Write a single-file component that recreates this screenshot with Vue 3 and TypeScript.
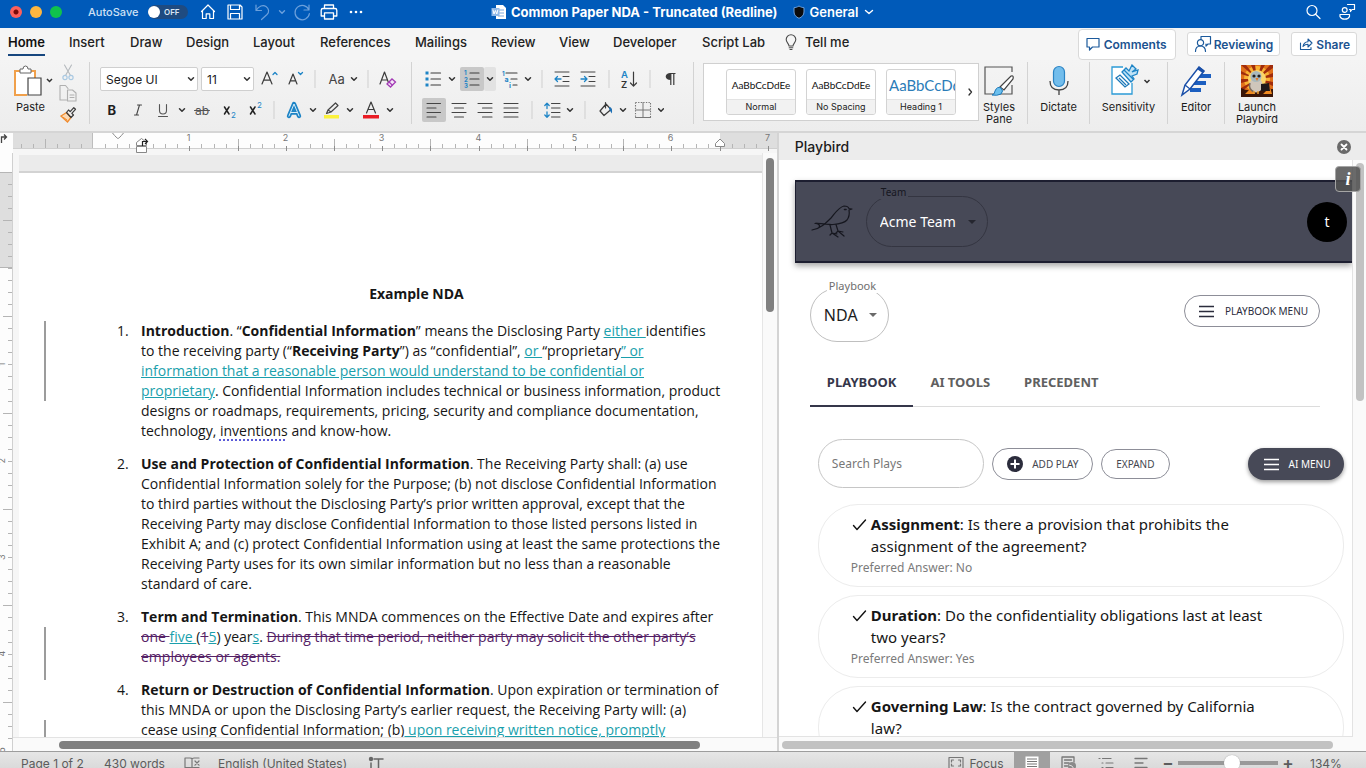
<script setup lang="ts">
import { h, ref, type FunctionalComponent } from 'vue'

/* Glyphs are drawn around the origin, so any box width keeps them centred. */
const ln = (d: string, c = '#3b3b3b', w = 1.2) =>
  `<path d="${d}" fill="none" stroke="${c}" stroke-width="${w}" stroke-linecap="round" stroke-linejoin="round"/>`
const tx = (s: string, x: number, y: number, size: number, c = '#2b2b2b', extra = '') =>
  `<text x="${x}" y="${y}" font-size="${size}" fill="${c}" font-family="Inter, sans-serif" ${extra}>${s}</text>`
const blue = '#1d84c6'

const glyphs: Record<string, string> = {
  chev: ln('M-2.5 -1.2 L0 1.3 L2.5 -1.2', '#333', 1.5),
  chevWhite: ln('M-3.5 -1.5 L0 1.5 L3.5 -1.5', '#fff', 1.4),
  chevFaint: ln('M-2.5 -1.2 L0 1.3 L2.5 -1.2', '#6ba0dc', 1.4),
  sep: '<path d="M0 -9V9" stroke="#cfcfcf" stroke-width="1"/>',
  home: ln('M-6.5 -0.5 L0 -7 L6.5 -0.5 M-5.5 -1.5V6.5H-1.8V1.8H1.8V6.5H5.5V-1.5', '#fff', 1.2),
  save: ln('M-7 -7H5L7 -5V7H-7Z M-4.5 -7V-2.5H4.5V-7 M-4.5 7V1.5H4.5V7', '#fff', 1.2),
  undo: ln('M-6 -7V-1.5H-0.5 M-6 -1.5C-3 -6 1 -7.5 4 -5.5C7 -3.5 7.5 0 5 2.5L-0.5 7.5', '#6ba0dc', 1.2),
  redo: ln('M7 -7V-2H2 M7 -2A7.2 7.2 0 1 0 7.4 1.5', '#6ba0dc', 1.2),
  print: ln('M-4.5 -3.5V-7H4.5V-3.5 M-4.5 4H-7.8V-1.8Q-7.8 -3.5 -6 -3.5H6Q7.8 -3.5 7.8 -1.8V4H4.5 M-4.5 0.8H4.5V7H-4.5Z', '#fff', 1.3),
  more: '<g fill="#fff"><circle cx="-5" cy="0" r="1.3"/><circle cx="0" cy="0" r="1.3"/><circle cx="5" cy="0" r="1.3"/></g>',
  word: '<path d="M-3 -7H4L7 -4V7H-3Z" fill="#fff"/><path d="M-1 -2H5M-1 1H5M-1 4H5" stroke="#7fa9dc" stroke-width="1"/><rect x="-7.5" y="-4" width="8" height="8" fill="#8fb8e8"/>' + ln('M-6 -2L-5 2L-3.6 -1.5L-2.2 2L-1.2 -2', '#fff', 1),
  shield: '<path d="M0 -6C2 -4.8 3.5 -4.4 5 -4.3V0C5 3 3 5 0 6.3C-3 5 -5 3 -5 0V-4.3C-3.5 -4.4 -2 -4.8 0 -6Z" fill="#0b0b0b" stroke="#6ba0dc" stroke-width="1"/>',
  search: '<circle cx="-1" cy="-1.5" r="5" fill="none" stroke="#fff" stroke-width="1.2"/>' + ln('M2.6 2.2L7 6.5', '#fff', 1.2),
  person: ln('M-7 2.5H2.5V4.5Q1.5 7.2 -2.3 7.2Q-6 7.2 -7 4.5Z M0.5 -7.5H7.5V-2.5H5L3.5 -0.5V-2.5H2.5', '#fff', 1.2) + '<circle cx="-2.3" cy="-2" r="2.4" fill="none" stroke="#fff" stroke-width="1.2"/>',
  bulb: ln('M-2 4C-2 1.5 -4.8 0.5 -4.8 -2.5A4.8 4.8 0 0 1 4.8 -2.5C4.8 0.5 2 1.5 2 4Z M-1.8 5.8H1.8 M-1 7.5H1', '#4a4a4a', 1.1),
  comment: ln('M-6 -5.5H6V3H-0.5L-3.5 6V3H-6Z', '#1c5a9c', 1.2),
  reviewing: ln('M-7.5 7.5C-7.5 3.5 -5 2 -2.5 2C0 2 2.5 3.5 2.5 7.5 M-2 -4.5V-7.5H7.5V0H5L3 2V0', '#1c5a9c', 1.2) + '<circle cx="-2.5" cy="-1.3" r="3.1" fill="none" stroke="#1c5a9c" stroke-width="1.2"/>',
  share: ln('M-5.5 -1V5.5H5V3.5 M-3 2.5C-2.5 -0.5 -1 -2.2 2 -2.3V-5L6 -1L2 3V0.3C0 0.3 -1.5 0.8 -3 2.5Z', '#1c5a9c', 1.1),
  cut: ln('M-3.5 -7.5L2.5 3 M3.5 -7.5L-2.5 3', '#b4b9bd', 1.1) + '<g fill="none" stroke="#a9c9e2" stroke-width="1.2"><circle cx="-3" cy="5" r="2.1"/><circle cx="3" cy="5" r="2.1"/></g>',
  copy: ln('M-1.5 6.5H-8V-8H-2.5L0 -5 M-0.5 -3.5H4.5L8 -0.5V7.5H-0.5Z M2 1.5H6 M2 4H6', '#b0b0b0', 1.1),
  brush: '<path d="M-7 1.5L-1.5 -2L3 3L-0.5 7.5Z" fill="#fbd9b4" stroke="#f08b2d" stroke-width="1.3"/>' + ln('M-4.5 3L-1 5.5', '#f08b2d', 1) + ln('M-1.5 -2L0.5 -4.5L2.2 -2.8L5.8 -6.8L7.5 -5.2L3.8 -1.2L5.5 0.5L3 3Z', '#3b3b3b', 1.2),
  grow: ln('M-7 5L-2 -7L3 5 M-5.3 1.2H1.3', '#3b3b3b', 1.2) + ln('M4 -4.5L6 -6.5L8 -4.5', blue, 1.3),
  shrink: ln('M-7 5L-3 -5L1 5 M-5.5 1.8H-0.5', '#3b3b3b', 1.2) + ln('M2.5 -6.5L4.5 -4.5L6.5 -6.5', blue, 1.3),
  caseAa: tx('Aa', -7.5, 4.5, 13, '#444'),
  clear: ln('M-8 5L-3.5 -7L1 5 M-6.3 1H-0.7', '#3b3b3b', 1.2) + '<path d="M-1 5L4 0L7.5 3L2.5 8Z" fill="#f4e6f7" stroke="#a33bb5" stroke-width="1.3"/><path d="M1 3L4.5 6.2" stroke="#a33bb5" stroke-width="1.2"/>',
  bold: tx('B', -4.5, 5, 13, '#1f1f1f', 'font-weight="700"'),
  italic: ln('M-0.5 -5H3.5 M-3.5 5H0.5 M1.5 -5L-1.5 5', '#444', 1.1),
  underline: ln('M-3.5 -5.5V0.5Q-3.5 4 0 4Q3.5 4 3.5 0.5V-5.5 M-4.5 6.5H4.5', '#555', 1.1),
  strike: tx('ab', -7, 4.5, 12, '#555') + ln('M-7.5 0.5H7.5', '#555', 1),
  sub: ln('M-4.5 -3L0 4 M0 -3L-4.5 4', '#222', 1.5) + tx('2', 2, 8, 8, blue),
  sup: ln('M-4.5 -3L0 4 M0 -3L-4.5 4', '#222', 1.5) + tx('2', 2, -2, 8, blue),
  effects: ln('M-5 6L0 -6L5 6 M-3.4 2.5H3.4', blue, 4.4) + ln('M-5 6L0 -6L5 6 M-3.4 2.5H3.4', '#d8edf9', 1),
  highlight: '<rect x="-8" y="5" width="15" height="3.5" fill="#fbf13c"/>' + ln('M-5.5 3.5L-4 0L3.5 -7L6 -4.5L-1 2L-5.5 3.5Z M-4 0L-1 2', '#444', 1.2),
  fontColor: '<rect x="-8" y="5" width="16" height="3.5" fill="#ea1c24"/>' + ln('M-4.5 3L0 -8L4.5 3 M-3 -0.5H3', '#3b3b3b', 1.2),
  bullets: '<g fill="#1d84c6"><rect x="-7.5" y="-7.5" width="3" height="3"/><rect x="-7.5" y="-1.5" width="3" height="3"/><rect x="-7.5" y="4.5" width="3" height="3"/></g>' + ln('M-2 -6H7.5 M-2 0H7.5 M-2 6H7.5'),
  numbers: tx('1', -8, -4, 6, blue, 'font-weight="700"') + tx('2', -8, 2.5, 6, blue, 'font-weight="700"') + tx('3', -8, 8.8, 6, blue, 'font-weight="700"') + ln('M-2 -6H7 M-2 0H7 M-2 6H7'),
  multi: tx('1', -8, -3, 6, blue, 'font-weight="700"') + tx('a', -5.5, 3, 7, blue, 'font-weight="700"') + tx('i', -1, 9, 7, blue, 'font-weight="700"') + ln('M-4 -6H7 M1 0H7 M3 6H7'),
  outdent: ln('M-7 -7H7 M1 -2.5H7 M1 2.5H7 M-7 7H7', '#444', 1) + ln('M-7 0H-1 M-4.5 -2.5L-7 0L-4.5 2.5', blue, 1.3),
  indent: ln('M-7 -7H7 M1 -2.5H7 M1 2.5H7 M-7 7H7', '#444', 1) + ln('M-7 0H-1 M-3.5 -2.5L-1 0L-3.5 2.5', blue, 1.3),
  sort: tx('A', -8, -1, 9.5, blue, 'font-weight="600"') + tx('Z', -8, 8.5, 9.5, '#333', 'font-weight="600"') + ln('M4.5 -7V7 M1.5 4L4.5 7.2L7.5 4'),
  pilcrow: '<path d="M-0.5 -5.5H5.5 M0.8 -5.5V6 M3.8 -5.5V6" stroke="#3b3b3b" stroke-width="1.2" fill="none"/><path d="M0.8 -6C-6 -6 -6 1 0.8 1Z" fill="#3b3b3b"/>',
  left: ln('M-7 -6.5H6.5 M-7 -2H2 M-7 2.5H6.5 M-7 7H2', '#444', 1.1),
  center: ln('M-7 -6.5H7 M-4.5 -2H4.5 M-7 2.5H7 M-4.5 7H4.5', '#444', 1.1),
  right: ln('M-7 -6.5H7 M-2.5 -2H7 M-7 2.5H7 M-2.5 7H7', '#444', 1.1),
  justify: ln('M-7 -6.5H7 M-7 -2H7 M-7 2.5H7 M-7 7H7', '#444', 1.1),
  spacing: ln('M-5 -6.5V-1.5 M-7.2 -4.5L-5 -6.8L-2.8 -4.5 M-5 2V7 M-7.2 5L-5 7.2L-2.8 5', blue, 1.3) + ln('M-0.5 -6.5H8 M-0.5 -2H8 M-0.5 2.5H8 M-0.5 7H8', '#444', 1),
  bucket: ln('M-6 1L0 -6L5 -0.5L-2 5.5Z M-0.5 -2V-7.5', '#3b3b3b', 1.2) + '<path d="M3 -3C6 -3 6.5 0 5.8 3.5L3.5 0Z" fill="#1d6fb5"/>',
  borders: '<path d="M-7.5 -7.5H7.5V7.5 M-7.5 -7.5V7.5" fill="none" stroke="#777" stroke-width="1.1" stroke-dasharray="1.3 1.3"/>' + ln('M-7.5 7.5H7.5 M-7.5 0H7.5 M0 -7.5V7.5', '#777', 1),
  check: ln('M-5.5 1.5L-2 5.5L6.500 -4', '#111', 1.4),
  burger: '<path d="M-7 -4.5H8 M-7 0.5H8 M-7 5.5H8" stroke="currentColor" stroke-width="1.6" fill="none"/>',
  plus: '<circle r="8" fill="#2b2c3c"/><path d="M-4.5 0H4.5 M0 -4.5V4.5" stroke="#fff" stroke-width="2"/>',
  close: '<circle r="7" fill="#6a6a6a"/>' + ln('M-2.5 -2.5L2.5 2.5 M2.5 -2.5L-2.5 2.5', '#fff', 1.8),
  next: ln('M-1 -3L1.5 0L-1 3', '#333', 1.3),
  proof: ln('M-7 -5H-2Q0 -5 0 -4V5Q0 4.5 -2 4.5H-7Z M0 -4Q0 -5 2 -5H7 M0 5Q0 4.5 2 4.5H7 M3 -2L7 2.2 M7 -2L3 2.2', '#777', 1.2),
  track: ln('M-2 -4H7 M2.5 -4V6 M0.5 6H4.5', '#666', 1.5) + '<circle cx="-5" cy="-4" r="2.2" fill="#666"/>' + ln('M-5 0V6', '#666', 1.5),
  focus: ln('M-7 -5.5H7V5.5H-7Z M-4.5 -1V-3H-2.5 M2.5 -3H4.5V-1 M4.5 1V3H2.5 M-2.5 3H-4.5V1', '#777', 1.2),
  pageView: '<rect x="-6.5" y="-6.5" width="13" height="15" fill="#fff"/><path d="M-5 -4H5M-5 -1.5H5M-5 1H5M-5 3.5H5M-5 6H5" stroke="#777" stroke-width="1"/>',
  webView: ln('M-7 -6H5V-1 M-7 -6V6H-2 M-4.5 -3H2.5 M-4.5 0H0 M-4.5 3H-1.5', '#777', 1.3) + '<circle cx="3" cy="3" r="4" fill="#8a8a8a"/><path d="M0 2L3 3L5 6" stroke="#ddd" stroke-width="1" fill="none"/>',
  outline: ln('M-7 -4.5H-6 M-3.5 -4.5H5 M-4 0H-3 M0 0H7 M-4 4.5H-3 M0 4.5H7', '#777', 1.2),
  draft: ln('M-6 -4.5H6 M-6 0H2 M-6 4.5H6', '#777', 1.3),
}

const Glyph: FunctionalComponent<{ name: string; w?: number; hgt?: number }> = (p) => {
  const w = p.w ?? 24
  const hh = p.hgt ?? 24
  return h('svg', {
    width: w, height: hh, viewBox: `${-w / 2} ${-hh / 2} ${w} ${hh}`,
    'aria-hidden': 'true', innerHTML: glyphs[p.name],
  })
}
Glyph.props = ['name', 'w', 'hgt']

type Tool = [name: string, width: number, label?: string, state?: string]
const fontTop: Tool[] = [['grow', 30, 'Increase font size'], ['shrink', 24, 'Decrease font size'], ['sep', 14], ['caseAa', 28, 'Change case'], ['chev', 8, 'Case options'], ['sep', 20], ['clear', 20, 'Clear formatting']]
const fontBottom: Tool[] = [['bold', 24, 'Bold'], ['italic', 28, 'Italic'], ['underline', 22, 'Underline'], ['chev', 16, 'Underline options'], ['strike', 24, 'Strikethrough'], ['sub', 30, 'Subscript'], ['sup', 22, 'Superscript'], ['sep', 16], ['effects', 24, 'Text effects'], ['chev', 14, 'Effect options'], ['highlight', 24, 'Highlight'], ['chev', 12, 'Highlight options'], ['fontColor', 30, 'Font colour'], ['chev', 8, 'Colour options']]
const paraTop: Tool[] = [['bullets', 22, 'Bullets'], ['chev', 16, 'Bullet options'], ['numbers', 24, 'Numbering', 'on'], ['chev', 12, 'Numbering options', 'half'], ['multi', 28, 'Multilevel list'], ['chev', 8, 'Multilevel options'], ['sep', 20], ['outdent', 20, 'Decrease indent'], ['indent', 32, 'Increase indent'], ['sep', 10], ['sort', 30, 'Sort'], ['sep', 12], ['pilcrow', 28, 'Show marks']]
const paraBottom: Tool[] = [['left', 24, 'Align left', 'on'], ['center', 26, 'Centre'], ['right', 26, 'Align right'], ['justify', 26, 'Justify'], ['sep', 16], ['spacing', 24, 'Line spacing'], ['chev', 12, 'Spacing options'], ['sep', 18], ['bucket', 24, 'Shading'], ['chev', 10, 'Shading options'], ['borders', 30, 'Borders'], ['chev', 6, 'Border options']]

const tabs = ['Home', 'Insert', 'Draw', 'Design', 'Layout', 'References', 'Mailings', 'Review', 'View', 'Developer', 'Script Lab']
const styleCards = ['Normal', 'No Spacing', 'Heading 1']

type Run = [text: string, kind?: 'b' | 'ins' | 'del' | 'dot']
interface Line { runs: Run[]; changed?: boolean; last?: boolean }
const clauses: Line[][] = [
  [
    { changed: true, runs: [['Introduction', 'b'], ['. “'], ['Confidential Information', 'b'], ['” means the Disclosing Party '], ['either ', 'ins'], ['identifies']] },
    { changed: true, runs: [['to the receiving party (“'], ['Receiving Party', 'b'], ['”) as “confidential”, '], ['or ', 'ins'], ['“proprietary'], ['” or', 'ins']] },
    { changed: true, runs: [['information that a reasonable person would understand to be confidential or', 'ins']] },
    { changed: true, runs: [['proprietary', 'ins'], ['. Confidential Information includes technical or business information, product']] },
    { runs: [['designs or roadmaps, requirements, pricing, security and compliance documentation,']] },
    { runs: [['technology, '], ['inventions', 'dot'], [' and know-how.']] },
  ],
  [
    { runs: [['Use and Protection of Confidential Information', 'b'], ['. The Receiving Party shall: (a) use']] },
    { runs: [['Confidential Information solely for the Purpose; (b) not disclose Confidential Information']] },
    { runs: [['to third parties without the Disclosing Party’s prior written approval, except that the']] },
    { runs: [['Receiving Party may disclose Confidential Information to those listed persons listed in']] },
    { runs: [['Exhibit A; and (c) protect Confidential Information using at least the same protections the']] },
    { runs: [['Receiving Party uses for its own similar information but no less than a reasonable']] },
    { runs: [['standard of care.']] },
  ],
  [
    { runs: [['Term and Termination', 'b'], ['. This MNDA commences on the Effective Date and expires after']] },
    { changed: true, runs: [['one ', 'del'], ['five ', 'ins'], ['('], ['1', 'del'], ['5', 'ins'], [') year'], ['s', 'ins'], ['. '], ['During that time period, neither party may solicit the other party’s', 'del']] },
    { changed: true, last: true, runs: [['employees or agents.', 'del']] },
  ],
  [
    { runs: [['Return or Destruction of Confidential Information', 'b'], ['. Upon expiration or termination of']] },
    { runs: [['this MNDA or upon the Disclosing Party’s earlier request, the Receiving Party will: (a)']] },
    { changed: true, runs: [['cease using Confidential Information; (b)'], [' upon receiving written notice, promptly', 'ins']] },
  ],
]

const plays = [
  { name: 'Assignment', text: 'Is there a provision that prohibits the assignment of the agreement?', answer: 'No' },
  { name: 'Duration', text: 'Do the confidentiality obligations last at least two years?', answer: 'Yes' },
  { name: 'Governing Law', text: 'Is the contract governed by California law?', answer: '' },
]
const panes = ['PLAYBOOK', 'AI TOOLS', 'PRECEDENT']
const pane = ref('PLAYBOOK')
const query = ref('')
const zoom = ref(55)

/* Ruler ticks: eight per inch, half inches are taller. */
const inch = 96.4
const topTicks = Array.from({ length: 63 }, (_, i) => i - 6).map((k) => ({ k, x: Math.round(80 + (k * inch) / 8) + 0.5 }))
const sideTicks = Array.from({ length: 48 }, (_, i) => i - 8).map((k) => ({ k, y: Math.round(119 + (k * inch) / 8) + 0.5 }))
</script>

<template>
  <div class="app">
    <header class="title">
      <div class="title-left">
        <span class="lights"><i class="red"></i><i class="amber"></i><i class="green"></i></span>
        <span class="autosave">AutoSave</span>
        <button class="switch" role="switch" aria-checked="false" aria-label="AutoSave"><i></i>OFF</button>
        <button aria-label="Home"><Glyph name="home" :w="28" /></button>
        <button aria-label="Save"><Glyph name="save" :w="26" /></button>
        <button aria-label="Undo"><Glyph name="undo" :w="28" /></button>
        <button aria-label="Undo options"><Glyph name="chevFaint" :w="12" /></button>
        <button aria-label="Redo"><Glyph name="redo" :w="28" /></button>
        <button aria-label="Print"><Glyph name="print" :w="26" /></button>
        <button aria-label="More"><Glyph name="more" :w="28" /></button>
      </div>
      <div class="title-mid">
        <Glyph name="word" :w="16" />
        <h1>Common Paper NDA - Truncated (Redline)</h1>
        <button class="label-btn"><Glyph name="shield" :w="14" />General<Glyph name="chevWhite" :w="12" /></button>
      </div>
      <div class="title-right">
        <button aria-label="Search"><Glyph name="search" :w="20" /></button>
        <button aria-label="People"><Glyph name="person" :w="20" /></button>
      </div>
    </header>

    <nav class="tabs">
      <div class="tab-list">
        <button v-for="(t, i) in tabs" :key="t" :class="{ active: i === 0 }">{{ t }}</button>
        <Glyph name="bulb" :w="14" />
        <button>Tell me</button>
      </div>
      <div class="actions">
        <button class="big"><Glyph name="comment" :w="16" :hgt="18" />Comments</button>
        <button><Glyph name="reviewing" :w="18" :hgt="18" />Reviewing</button>
        <button><Glyph name="share" :w="16" :hgt="18" />Share</button>
      </div>
    </nav>

    <section class="ribbon">
      <div class="group clip">
        <button class="paste">
          <svg width="40" height="34" viewBox="0 0 40 34" aria-hidden="true">
            <path d="M3 6H21V30H3Z" fill="#fff" />
            <path d="M22 13V6H2V30H14" fill="none" stroke="#f0a04b" stroke-width="2" />
            <path d="M7 8V4H10Q10 1 12.500 1Q15 1 15 4H18V8Z" fill="#fff" stroke="#666" stroke-width="1" />
            <path d="M15 13H28V30H15Z" fill="#fff" stroke="#444" stroke-width="1.200" />
            <path d="M34 14L36.500 16.500L39 14" fill="none" stroke="#333" stroke-width="1.500" />
          </svg>
          <span>Paste</span>
        </button>
        <div class="stack">
          <button aria-label="Cut"><Glyph name="cut" :w="20" :hgt="21" /></button>
          <button aria-label="Copy"><Glyph name="copy" :w="20" :hgt="21" /></button>
          <button aria-label="Format painter"><Glyph name="brush" :w="20" :hgt="21" /></button>
        </div>
      </div>

      <div class="group font">
        <div class="tools">
          <span class="combo name"><select aria-label="Font"><option>Segoe UI</option></select><Glyph name="chev" :w="10" /></span>
          <span class="combo size"><select aria-label="Font size"><option>11</option></select><Glyph name="chev" :w="10" /></span>
          <template v-for="(t, i) in fontTop" :key="i">
            <Glyph v-if="t[0] === 'sep'" name="sep" :w="t[1]" />
            <button v-else :aria-label="t[2]"><Glyph :name="t[0]" :w="t[1]" /></button>
          </template>
        </div>
        <div class="tools">
          <template v-for="(t, i) in fontBottom" :key="i">
            <Glyph v-if="t[0] === 'sep'" name="sep" :w="t[1]" />
            <button v-else :aria-label="t[2]"><Glyph :name="t[0]" :w="t[1]" /></button>
          </template>
        </div>
      </div>

      <div class="group para">
        <div v-for="(row, r) in [paraTop, paraBottom]" :key="r" class="tools">
          <template v-for="(t, i) in row" :key="i">
            <Glyph v-if="t[0] === 'sep'" name="sep" :w="t[1]" />
            <button v-else :class="t[3]" :aria-label="t[2]"><Glyph :name="t[0]" :w="t[1]" /></button>
          </template>
        </div>
      </div>

      <div class="group styles">
        <div class="gallery">
          <button v-for="s in styleCards" :key="s" class="card" :class="{ heading: s === 'Heading 1' }">
            <span class="sample">{{ s === 'Heading 1' ? 'AaBbCcDd' : 'AaBbCcDdEe' }}</span>
            <span class="caption">{{ s }}</span>
          </button>
          <button class="more" aria-label="More styles"><Glyph name="next" :w="10" /></button>
        </div>
        <button class="large pane-btn">
          <svg width="32" height="34" viewBox="0 0 32 34" aria-hidden="true">
            <path d="M29 21V30H2V3H29V8" fill="none" stroke="#555" stroke-width="1.200" />
            <path d="M17 23L28 12Q31 11 30 15L21 26Z" fill="#fff" stroke="#444" stroke-width="1.200" />
            <path d="M9 31Q12 30 12 27Q14 22 18 24Q21 27 18 30Q14 32 9 31Z" fill="#6cc0ee" stroke="#1d78b8" stroke-width="1" />
          </svg>
          <span>Styles<br>Pane</span>
        </button>
      </div>

      <div class="group dictate">
        <button class="large">
          <svg width="32" height="34" viewBox="0 0 32 34" aria-hidden="true">
            <rect x="10.500" y="2.500" width="11" height="20" rx="5.500" fill="#72bdec" stroke="#2b84c4" stroke-width="1.200" />
            <path d="M7 17Q7 26 16 26Q25 26 25 17M16 26V31" fill="none" stroke="#444" stroke-width="1.300" />
          </svg>
          <span>Dictate</span>
        </button>
      </div>
      <div class="group sens">
        <button class="large">
          <svg width="46" height="34" viewBox="0 0 46 34" aria-hidden="true">
            <path d="M17 3H6V30H26V19" fill="#fff" stroke="#2b9bd6" stroke-width="1.300" />
            <path d="M10 14L14 11L23 20L19 23Z" fill="#fff" stroke="#1d78b8" stroke-width="1.300" />
            <path d="M13 14L20 21" stroke="#1d78b8" stroke-width="1.200" />
            <path d="M16 8L20 4L23 7L26 1L30 5L26 8L32 6L31 10L26 12L28 15L25 18Z" fill="#bfe2f6" stroke="#1d84c6" stroke-width="1.300" />
            <path d="M18 6L27 15" stroke="#1d84c6" stroke-width="1.300" />
            <path d="M38.500 16L41 18.500L43.500 16" fill="none" stroke="#333" stroke-width="1.500" />
          </svg>
          <span>Sensitivity</span>
        </button>
      </div>
      <div class="group editor">
        <button class="large">
          <svg width="32" height="34" viewBox="0 0 32 34" aria-hidden="true">
            <path d="M15 12H31M12 19H26M10 26H21" stroke="#1c5fc0" stroke-width="4" />
            <path d="M2 31L5 21L19 3L24 7L10 25Z" fill="#fff" stroke="#1a4fa8" stroke-width="1.500" />
            <path d="M17 5L19 2.500L24.500 6.500L22.500 9Z" fill="#1a4fa8" />
            <path d="M5 21L10 25" stroke="#1a4fa8" stroke-width="1.200" />
          </svg>
          <span>Editor</span>
        </button>
      </div>
      <div class="group launch">
        <button class="large">
          <svg width="32" height="34" viewBox="0 0 32 34" aria-hidden="true">
            <rect y="1" width="32" height="32" fill="#e0701a" />
            <circle cx="16" cy="15" r="13" fill="#f9b233" />
            <path d="M16 15L0 1H5ZM16 15L10 1H14ZM16 15L20 1H24ZM16 15L29 1H32V4ZM16 15L32 9V13ZM16 15L0 7V10ZM16 15L0 15V19ZM16 15L32 18V22ZM16 15L0 24V28ZM16 15L32 26V31Z" fill="#a02c0c" />
            <circle cx="16" cy="15" r="9" fill="#fbd56a" />
            <path d="M0 33V24Q6 27 10 26L32 25V33Z" fill="#3a1608" />
            <path d="M4 30L10 24L14 30ZM22 30L29 23L31 30Z" fill="#f08a20" />
            <ellipse cx="15" cy="21" rx="6.500" ry="7.500" fill="#cfc6bb" />
            <circle cx="15" cy="12.500" r="5.500" fill="#a9b9bd" />
            <circle cx="13" cy="12" r="1.600" fill="#22201f" /><circle cx="18" cy="12" r="1.600" fill="#22201f" />
            <path d="M14.500 14H17.500L16 17Z" fill="#e5741a" />
            <path d="M20 20L28 19L29 27H20Z" fill="#20191a" />
            <path d="M9 19Q7 25 13 28" fill="none" stroke="#7a6a5e" stroke-width="1.500" />
            <path d="M13 27V30M17 27V30" stroke="#f0a030" stroke-width="1.500" />
          </svg>
          <span>Launch<br>Playbird</span>
        </button>
      </div>
    </section>

    <main class="work">
      <section class="doc">
        <div class="ruler">
          <svg class="tabstop" width="13" height="20" viewBox="0 0 13 20" aria-hidden="true">
            <path d="M1.500 10V4H6M4 1.500L6.500 4L4 6.500" fill="none" stroke="#444" stroke-width="1.300" />
          </svg>
          <svg class="scale" width="100%" height="20" aria-hidden="true">
            <rect width="100%" height="15" fill="#fdfdfd" />
            <rect width="80" height="15" fill="#dedede" />
            <rect x="707" width="100%" height="15" fill="#dedede" />
            <path d="M0 15.500H765" stroke="#cfcfcf" />
            <path d="M79.500 0V15" stroke="#bdbdbd" />
            <template v-for="t in topTicks" :key="t.k">
              <path v-if="t.k % 8 || t.k < 0" :d="`M${t.x} ${t.k % 4 ? 11 : 6}V15`" stroke="#b5b5b5" />
              <text v-else-if="t.k > 0" :x="t.x - 1" y="8" text-anchor="middle">{{ t.k / 8 }}</text>
              <path v-if="t.k > 4 && t.k % 4 === 0" :d="`M${t.x} 13V18`" stroke="#8d8d8d" />
            </template>
            <path d="M99.500 0Q104 5.500 105 5.500Q106 5.500 110.500 0" fill="#fff" stroke="#8a8a8a" />
            <path d="M123.500 12.500V9.500L128.500 5.500L133.500 9.500V12.500ZM123.500 13.500H133.500V19.500H123.500Z" fill="#fff" stroke="#888" />
            <path d="M129.500 13V8.500H134M132 6L134.500 8.500L132 11" fill="none" stroke="#222" stroke-width="1.200" />
            <path d="M702.500 13.500V10.500L707 6L711.500 10.500V13.500Z" fill="#fff" stroke="#888" />
          </svg>
        </div>
        <div class="canvas">
          <svg class="side" width="13" height="100%" aria-hidden="true">
            <rect y="20" width="12" height="95" fill="#dedede" />
            <path d="M0 19.500H12M0 114.500H12" stroke="#b5b5b5" />
            <template v-for="t in sideTicks" :key="t.k">
              <path v-if="t.k < 0 || t.k % 8" :d="`M${t.k % 4 ? 8 : 3} ${t.y - 4}H12`" stroke="#b5b5b5" />
              <path v-else :d="`M8 ${t.y - 4}H12`" stroke="#b5b5b5" />
            </template>
            <text v-for="n in 5" :key="n" transform="rotate(-90)" :x="-(115 + n * inch)" y="5" text-anchor="middle">{{ n }}</text>
            <path d="M12.500 0V800" stroke="#d0d0d0" />
          </svg>
          <div class="view">
            <div class="scroll-row">
              <div class="sheet">
                <div class="gap-band"></div>
                <article class="page">
                  <h2>Example NDA</h2>
                  <ol>
                    <li v-for="(c, i) in clauses" :key="i">
                      <span class="num">{{ i + 1 }}.</span>
                      <p>
                        <span v-for="(l, j) in c" :key="j" class="line" :class="{ changed: l.changed, last: l.last }"><template v-for="(r, k) in l.runs" :key="k"><b v-if="r[1] === 'b'">{{ r[0] }}</b><ins v-else-if="r[1] === 'ins'">{{ r[0] }}</ins><del v-else-if="r[1] === 'del'">{{ r[0] }}</del><span v-else :class="r[1]">{{ r[0] }}</span></template></span>
                      </p>
                    </li>
                  </ol>
                </article>
              </div>
              <div class="vbar"><i></i></div>
            </div>
            <div class="hbar"><i></i></div>
          </div>
        </div>
      </section>

      <aside class="addin">
        <div class="addin-head">
          <h2>Playbird</h2>
          <button aria-label="Close"><Glyph name="close" :w="16" :hgt="16" /></button>
        </div>
        <div class="addin-row">
          <div class="addin-body">
            <div class="banner">
              <svg width="42" height="36" viewBox="0 0 42 36" aria-hidden="true">
                <g fill="none" stroke="#16171f" stroke-width="1.200" stroke-linecap="round" stroke-linejoin="round">
                  <path d="M1 26C9 25 15 19 20 14C25 8 28 3 33 2C36 2 37.500 3 38 4.500L41 5L38 6C38.500 9 39 12 36 16C33 19.500 28 20 22 20.500C17 21 12 19 4 19.500C7 19 10 22 8 23" />
                  <path d="M19 21L21 29M19 31L21 29L27 33M21 29L26 30M25 20.500L27 27L33 32M27 27L32 28M27 27L25 29" />
                  <path d="M33.500 5.500H35" stroke-width="1.600" />
                </g>
              </svg>
              <label class="pill team"><span>Team</span><select><option>Acme Team</option></select><i></i></label>
              <span class="avatar">t</span>
            </div>
            <div class="row-a">
              <label class="pill book"><span>Playbook</span><select><option>NDA</option></select><i></i></label>
              <button class="outline menu"><Glyph name="burger" :w="20" :hgt="16" />PLAYBOOK MENU</button>
            </div>
            <div class="pane-tabs" role="tablist">
              <button v-for="p in panes" :key="p" role="tab" :aria-selected="p === pane" :class="{ active: p === pane }" @click="pane = p">{{ p }}</button>
            </div>
            <div class="row-b">
              <input v-model="query" type="text" placeholder="Search Plays" aria-label="Search Plays">
              <button class="outline add"><Glyph name="plus" :w="18" :hgt="18" />ADD PLAY</button>
              <button class="outline expand">EXPAND</button>
              <button class="ai"><Glyph name="burger" :w="18" :hgt="16" />AI MENU</button>
            </div>
            <section v-for="p in plays" :key="p.name" class="play">
              <div class="q">
                <Glyph name="check" :w="16" :hgt="22" />
                <p><b>{{ p.name }}</b>: {{ p.text }}</p>
              </div>
              <small v-if="p.answer">Preferred Answer: {{ p.answer }}</small>
            </section>
          </div>
          <div class="addin-vbar"><i></i></div>
          <button class="info" aria-label="Information">i</button>
        </div>
        <div class="addin-hbar"><i></i></div>
      </aside>
    </main>

    <footer class="status">
      <span class="s-page">Page 1 of 2</span>
      <span class="s-words">430 words</span>
      <Glyph name="proof" :w="16" />
      <span class="s-lang">English (United States)</span>
      <Glyph name="track" :w="16" />
      <div class="s-right">
        <button class="s-focus"><Glyph name="focus" :w="16" />Focus</button>
        <button class="view-on" aria-label="Print layout"><Glyph name="pageView" :w="36" /></button>
        <button aria-label="Web layout"><Glyph name="webView" :w="38" /></button>
        <button aria-label="Outline"><Glyph name="outline" :w="36" /></button>
        <button aria-label="Draft"><Glyph name="draft" :w="34" /></button>
        <button class="step" aria-label="Zoom out">−</button>
        <input v-model="zoom" type="range" min="0" max="100" aria-label="Zoom">
        <button class="step" aria-label="Zoom in">+</button>
        <span class="pct">134%</span>
      </div>
    </footer>
  </div>
</template>

<style>
html, body { margin: 0; overflow: hidden; }
</style>

<style scoped>
* { box-sizing: border-box; }
.app { display: flex; flex-direction: column; height: 100vh; overflow: hidden; font-family: Inter, "Liberation Sans", sans-serif; font-size: 12px; color: #1c1c1c; background: #f4f4f4; }
button, select, input { font: inherit; color: inherit; }
button { display: inline-flex; align-items: center; justify-content: center; padding: 0; border: 0; background: none; white-space: nowrap; }
svg { display: block; flex: none; }
h1, h2, p, ol { margin: 0; padding: 0; }
select { appearance: none; border: 0; background: none; outline: 0; }

.title { flex: none; display: grid; grid-template-columns: 491px auto 1fr; align-items: center; height: 28px; padding-bottom: 4px; background: #005ab9; color: #fff; }
.title-left, .title-mid, .title-right { display: flex; align-items: center; }
.lights { display: flex; gap: 8px; padding: 0 26px 0 10px; }
.lights i { width: 12px; height: 12px; border-radius: 50%; }
.red { background: radial-gradient(circle, #7a0a08 0 2px, #fc605b 3px); }
.amber { background: #fdb640; }
.green { background: #10c24c; }
.autosave { width: 60px; color: #cfe0f4; font-size: 11px; font-weight: 500; }
.switch { gap: 4px; width: 40px; height: 14px; margin-right: 6px; border-radius: 7px; background: #1f4b80; color: #dbe7f5; font-size: 8px; font-weight: 600; justify-content: flex-start; }
.switch i { width: 12px; height: 12px; border-radius: 50%; background: #fff; }
.title-mid h1 { margin: 0 14px 0 4px; font-size: 13px; font-weight: 700; white-space: nowrap; }
.label-btn { gap: 4px; font-size: 13px; font-weight: 600; }
.title-right { justify-content: flex-end; gap: 14px; padding-right: 9px; }

.tabs { flex: none; display: flex; justify-content: space-between; height: 32px; background: #f5f5f5; }
.tab-list { display: grid; grid-template-columns: 61px 61px 56px 67px 67px 95px 76px 68px 54px 89px 82px 21px auto; justify-items: start; align-items: center; height: 28px; padding-left: 8px; font-size: 13px; font-weight: 500; }
.tab-list button { height: 28px; color: #222; font-weight: 500; }
.tab-list .active { font-weight: 600; color: #111; box-shadow: inset 0 -2px #17477f; }
.actions { display: flex; align-items: center; gap: 11px; padding-right: 9px; color: #1c5390; font-weight: 600; }
.actions button { gap: 2px; height: 24px; padding: 0 6px; border: 1px solid #d9d9d9; border-radius: 3px; background: #fff; }
.actions .big { height: 31px; padding: 0 8px 0 6px; gap: 3px; border-radius: 4px; }

.ribbon { flex: none; display: flex; align-items: flex-start; height: 73px; padding-top: 2px; border-bottom: 2px solid #d5d5d5; background: linear-gradient(#f4f4f4, #ededed); }
.group { flex: none; height: 62px; border-right: 1px solid #d3d3d3; }
.clip { display: flex; width: 90px; padding-left: 13px; }
.paste { flex-direction: column; justify-content: flex-start; width: 42px; padding-top: 3px; font-size: 11px; align-items: flex-start; }
.paste span { padding: 1px 0 0 3px; line-height: 14px; }
.stack { display: flex; flex-direction: column; margin-left: 3px; }
.font { width: 322px; padding-left: 10px; }
.tools { display: flex; align-items: center; height: 32px; }
.tools:first-child { padding-top: 2px; }
.tools button { height: 24px; border-radius: 2px; }
.tools .on { background: #c8c8c8; }
.tools .half { background: #e2e2e2; }
.combo { display: flex; align-items: center; height: 24px; border: 1px solid #cfcfcf; border-radius: 2px; background: #fff; }
.combo select { flex: 1; min-width: 0; padding: 0 0 0 5px; }
.combo.name { width: 98px; margin-right: 3px; padding-right: 1px; }
.combo.size { width: 53px; padding-right: 1px; }
.para { width: 282px; padding-left: 10px; }
.styles { display: flex; width: 334px; padding-left: 9px; }
.gallery { display: flex; align-items: center; gap: 10px; width: 276px; height: 58px; padding-left: 22px; border: 1px solid #d0d0d0; background: #fff; margin-top: 1px; }
.card { flex-direction: column; width: 70px; height: 46px; border: 1px solid #d3d3d3; border-radius: 3px; overflow: hidden; background: #fff; }
.sample { flex: 1; width: 100%; line-height: 31px; font-family: Lato, "Noto Sans", sans-serif; font-size: 10px; color: #111; overflow: hidden; text-align: center; }
.caption { width: 100%; border-top: 1px solid #e3e3e3; background: #f2f2f2; font-size: 9px; line-height: 14px; text-align: center; }
.heading .sample { padding: 0 2px; color: #2b7cb8; font-size: 15px; text-align: left; }
.more { margin-left: -1px; }
.large { flex-direction: column; justify-content: flex-start; width: 100%; padding-top: 2px; font-size: 11px; line-height: 12px; }
.large span { padding-top: 3px; }
.styles .pane-btn { width: 40px; }
.dictate { width: 62px; }
.sens { width: 78px; }
.editor { width: 57px; }
.launch { width: 64px; border: 0; }

.work { flex: 1; min-height: 0; display: flex; background: #fff; }
.doc { flex: 778 1 0; min-width: 0; display: flex; flex-direction: column; border-right: 2px solid #d4d4d4; background: #f6f6f6; }
.ruler { flex: none; display: flex; height: 20px; }
.ruler text, .side text { font-size: 9px; fill: #777; }
.tabstop { background: #fdfdfd; }
.scale { flex: 1; min-width: 0; }
.canvas { flex: 1; min-height: 0; display: flex; }
.side { background: #fdfdfd; }
.view { flex: 1; min-width: 0; display: flex; flex-direction: column; }
.scroll-row { flex: 1; min-height: 0; display: flex; }
.sheet { flex: 1; min-width: 0; overflow: hidden; margin-left: 6px; border-right: 1px solid #e6e6e6; padding-top: 2px; }
.gap-band { height: 18px; border-bottom: 2px solid #d3d3d3; background: #ebebeb; }
.page { height: 100%; padding: 111px 42px 0 94px; background: #fff; font-family: "Open Sans", "Noto Sans", sans-serif; font-size: 14px; line-height: 20px; color: #161616; }
.page h2 { margin-bottom: 17px; font-size: 14px; font-weight: 700; text-align: center; }
.page ol { padding-left: 4px; list-style: none; }
.page li { display: flex; margin-bottom: 13px; }
.num { flex: none; width: 24px; }
.line { display: block; position: relative; white-space: pre; }
.changed::before { content: ""; position: absolute; left: -97px; top: 0; bottom: 0; width: 2px; background: #9c9c9c; }
.last::before { bottom: -13px; }
ins { color: #1a9fac; text-decoration: underline; }
del { color: #552266; text-decoration: line-through; }
.dot { text-decoration: underline dotted #5a5ad8 2px; text-underline-offset: 3px; }
.vbar { width: 14px; padding: 5px 0 0 3px; background: #fafafa; }
.vbar i { display: block; width: 8px; height: 154px; border-radius: 4px; background: #808080; }
.hbar { flex: none; height: 14px; padding: 3px 77px 0 46px; border-top: 1px solid #e3e3e3; background: #fafafa; }
.hbar i { display: block; height: 8px; border-radius: 4px; background: #808080; }

.addin { flex: 588 1 0; min-width: 0; display: flex; flex-direction: column; font-family: "Noto Sans", sans-serif; }
.addin-head { flex: none; display: flex; align-items: center; justify-content: space-between; height: 27px; padding: 0 14px 0 16px; background: #ececec; font-family: Inter, sans-serif; }
.addin-head h2 { font-size: 14px; font-weight: 500; }
.addin-row { position: relative; flex: 1; min-height: 0; display: flex; }
.addin-body { flex: 1; min-width: 0; overflow: hidden; border-right: 1px solid #e3e3e3; border-bottom: 1px solid #e3e3e3; padding: 20px 0 0 16px; }
.banner { display: flex; align-items: center; height: 83px; padding: 0 5px 0 15px; border: 1px solid #1d1e30; border-width: 2px 0 2px 1px; background: #474957; box-shadow: 0 3px 6px rgba(0, 0, 0, .35); }
.pill { position: relative; display: flex; align-items: center; border: 1px solid #bfbfbf; border-radius: 27px; }
.pill span { position: absolute; left: 16px; top: -10px; padding: 0 2px; font-size: 11px; line-height: 14px; color: #6e6e6e; background: #fff; }
.pill select { flex: 1; min-width: 0; padding: 0 0 0 13px; }
.pill i { margin-right: 11px; border: 4px solid transparent; border-top-color: #6a6a6a; border-bottom: 0; }
.team { width: 122px; height: 51px; margin-left: 13px; border-color: #343541; }
.team span { left: 12px; top: -12px; font-size: 10px; color: #16171f; background: #474957; }
.team select { font-size: 14px; color: #fff; }
.team i { border-top-color: #25262f; }
.avatar { width: 40px; height: 40px; margin-left: auto; border-radius: 50%; background: #000; color: #fff; font-size: 14px; line-height: 40px; text-align: center; }
.row-a { display: flex; justify-content: space-between; align-items: flex-start; padding: 25px 32px 0 15px; }
.book { width: 79px; height: 54px; font-size: 16px; }
.outline { height: 32px; border: 1px solid #8d8e98; border-radius: 16px; color: #45464f; font-size: 10px; background: #fff; }
.menu { gap: 9px; width: 136px; margin-top: 7px; color: #2b2c3c; }
.pane-tabs { display: flex; height: 49px; margin: 16px 32px 0 15px; border-bottom: 1px solid #dcdcdc; }
.pane-tabs button { height: 48px; padding: 0 17px; color: #606060; font-size: 13px; font-weight: 700; }
.pane-tabs .active { height: 49px; color: #35364a; border-bottom: 2px solid #35364a; }
.row-b { display: flex; align-items: center; gap: 8px; height: 49px; margin: 32px 8px 16px 23px; }
.row-b input { width: 166px; height: 49px; padding: 0 13px; border: 1px solid #c6c6c6; border-radius: 25px; outline: 0; background: #fff; font-size: 12px; }
.row-b input::placeholder { color: #777; opacity: 1; }
.add { gap: 8px; width: 101px; }
.expand { width: 69px; height: 30px; }
.ai { gap: 9px; width: 96px; height: 32px; margin-left: auto; border-radius: 16px; background: #474957; color: #fff; font-size: 10px; box-shadow: 0 2px 4px rgba(0, 0, 0, .4); }
.play { height: 83px; margin: 0 8px 8px 23px; padding: 8px 64px 0 32px; border: 1px solid #ececec; border-radius: 40px; }
.q { display: flex; gap: 4px; color: #161616; font-size: 15px; line-height: 22px; }
.play small { display: block; font-size: 12px; line-height: 22px; color: #7b7b7b; }
.addin-vbar { width: 13px; padding: 3px 0 0 3px; background: #fafafa; }
.addin-vbar i { display: block; width: 8px; height: 238px; border-radius: 4px; background: #c2c2c2; }
.info { position: absolute; top: 6px; right: 5px; width: 26px; height: 26px; border: 1px solid #a5a5a5; border-radius: 4px; background: rgba(80, 80, 80, .85); color: #fff; font: italic 700 18px "Liberation Serif", serif; }
.addin-hbar { flex: none; height: 14px; padding: 4px 33px 0 3px; background: #fafafa; }
.addin-hbar i { display: block; height: 8px; border-radius: 4px; background: #c2c2c2; }

.status { flex: none; display: flex; align-items: center; height: 17px; padding: 6px 0 0 21px; border-top: 1px solid #9d9d9d; background: linear-gradient(#e6e6e6, #dadada); color: #5c5c5c; white-space: nowrap; }
.s-page { width: 83px; }
.s-words { width: 80px; }
.s-lang { width: 133px; margin-left: 18px; }
.status > svg:last-of-type { margin-left: 17px; }
.s-right { display: flex; align-items: center; margin-left: auto; }
.s-focus { gap: 5px; width: 56px; margin-right: 10px; }
.view-on { background: #a0a0a0; }
.step { width: 20px; font-size: 17px; font-weight: 600; }
.pct { width: 68px; padding-left: 12px; }
.status input { appearance: none; width: 100px; height: 16px; margin: 0; background: linear-gradient(#999, #999) center / 100% 4px no-repeat; }
.status input::-webkit-slider-thumb { appearance: none; width: 16px; height: 16px; border-radius: 50%; background: #fff; box-shadow: 0 0 1px #888; }
</style>
